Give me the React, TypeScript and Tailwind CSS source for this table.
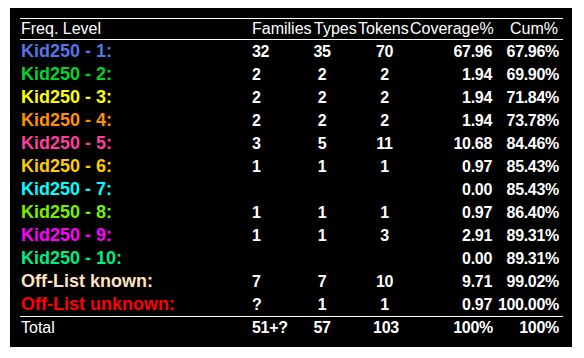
import React from "react";

type Row = {
  label: string;
  color: string;
  families: string;
  types: string;
  tokens: string;
  coverage: string;
  cum: string;
};

const rows: Row[] = [
  { label: "Kid250 - 1:", color: "text-[#5577e6]", families: "32", types: "35", tokens: "70", coverage: "67.96", cum: "67.96%" },
  { label: "Kid250 - 2:", color: "text-[#00d62a]", families: "2", types: "2", tokens: "2", coverage: "1.94", cum: "69.90%" },
  { label: "Kid250 - 3:", color: "text-[#ffff00]", families: "2", types: "2", tokens: "2", coverage: "1.94", cum: "71.84%" },
  { label: "Kid250 - 4:", color: "text-[#ff9000]", families: "2", types: "2", tokens: "2", coverage: "1.94", cum: "73.78%" },
  { label: "Kid250 - 5:", color: "text-[#ff3d9a]", families: "3", types: "5", tokens: "11", coverage: "10.68", cum: "84.46%" },
  { label: "Kid250 - 6:", color: "text-[#ffcc00]", families: "1", types: "1", tokens: "1", coverage: "0.97", cum: "85.43%" },
  { label: "Kid250 - 7:", color: "text-[#00ffff]", families: "", types: "", tokens: "", coverage: "0.00", cum: "85.43%" },
  { label: "Kid250 - 8:", color: "text-[#77f000]", families: "1", types: "1", tokens: "1", coverage: "0.97", cum: "86.40%" },
  { label: "Kid250 - 9:", color: "text-[#ff00ff]", families: "1", types: "1", tokens: "3", coverage: "2.91", cum: "89.31%" },
  { label: "Kid250 - 10:", color: "text-[#00ee80]", families: "", types: "", tokens: "", coverage: "0.00", cum: "89.31%" },
  { label: "Off-List known:", color: "text-[#ffe2c0]", families: "7", types: "7", tokens: "10", coverage: "9.71", cum: "99.02%" },
  { label: "Off-List unknown:", color: "text-[#ff0000]", families: "?", types: "1", tokens: "1", coverage: "0.97", cum: "100.00%" },
];

const grid = "grid grid-cols-[230px_62px_46px_52px_83px_70px]";

function NumCells({ r }: { r: Omit<Row, "label" | "color"> }) {
  return (
    <>
      <div className="pl-[2px]">{r.families}</div>
      <div className="pl-[1px]">
        <span className="inline-block w-[18px] text-center">{r.types}</span>
      </div>
      <div className="text-center pl-[1px]">{r.tokens}</div>
      <div className="text-right pr-[1px]">{r.coverage}</div>
      <div className="text-right pr-[4px]">{r.cum}</div>
    </>
  );
}

export default function App() {
  return (
    <div className="min-h-screen bg-white pt-[8px] pl-[10px] font-['Liberation_Sans',Arial,sans-serif] text-white">
      <div className="w-[562px] h-[339px] bg-black pt-[10px] pl-[10px]">
        <div className="w-[543px]">
          {/* header */}
          <div className={`${grid} border-t border-white h-[21px] text-[16px] leading-[20px]`}>
            <div className="pl-[1px]">Freq. Level</div>
            <div className="pl-[2px]">Families</div>
            <div className="pl-[2px]">Types</div>
            <div>Tokens</div>
            <div className="text-right">Coverage%</div>
            <div className="text-right pr-[5px]">Cum%</div>
          </div>
          <div className="border-t border-white" />

          {/* levels */}
          {rows.map((r) => (
            <div key={r.label} className={`${grid} h-[23px] leading-[23px] font-bold`}>
              <div className={`pl-[1px] text-[18px] ${r.color}`}>{r.label}</div>
              <div className="contents text-[16px] tracking-[-0.3px]">
                <NumCells r={r} />
              </div>
            </div>
          ))}

          {/* total */}
          <div className={`${grid} border-t border-white h-[23px] leading-[22px]`}>
            <div className="pl-[1px] text-[16px]">Total</div>
            <div className="contents text-[16px] tracking-[-0.3px] font-bold">
              <div className="pl-[2px]">51+?</div>
              <div className="pl-[1px]">
                <span className="inline-block w-[18px] text-center">57</span>
              </div>
              <div className="text-center pl-[4px]">103</div>
              <div className="text-right">100%</div>
              <div className="text-right pr-[4px]">100%</div>
            </div>
          </div>
        </div>
      </div>
    </div>
  );
}
